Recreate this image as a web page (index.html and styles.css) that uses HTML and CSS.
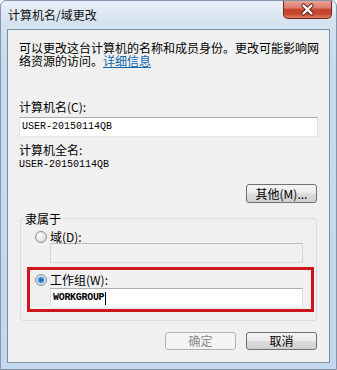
FILE: index.html
```html
<!DOCTYPE html>
<html lang="zh-CN">
<head>
<meta charset="utf-8">
<title>计算机名/域更改</title>
<link rel="stylesheet" href="styles.css">
</head>
<body>
<div class="window">
  <div class="titlebar">
    <span class="title">计算机名/域更改</span>
    <button class="close" aria-label="关闭">
      <svg width="47" height="17" viewBox="0 0 47 17">
        <path d="M19.5 4.5 L27.5 12.5 M27.5 4.5 L19.5 12.5" stroke="#5b1c12" stroke-width="4.2" stroke-linecap="round" fill="none"/>
        <path d="M19.5 4.5 L27.5 12.5 M27.5 4.5 L19.5 12.5" stroke="#ffffff" stroke-width="2.4" stroke-linecap="round" fill="none"/>
      </svg>
    </button>
  </div>
  <div class="client">
    <p class="desc">可以更改这台计算机的名称和成员身份。更改可能影响网络资源的访问。<a class="link" href="#">详细信息</a></p>
    <div class="label label-name">计算机名(C):</div>
    <div class="field field-name">USER-20150114QB</div>
    <div class="label label-full">计算机全名:</div>
    <div class="value">USER-20150114QB</div>
    <div class="more-row"><button class="btn">其他(M)...</button></div>
    <fieldset class="group">
      <legend class="legend">隶属于</legend>
      <div class="radio-row row-domain"><span class="radio"></span><span class="radio-text">域(D):</span></div>
      <div class="field field-sub field-disabled"></div>
      <div class="highlight">
        <div class="radio-row row-work"><span class="radio radio-on"></span><span class="radio-text">工作组(W):</span></div>
        <div class="field field-sub field-work"><span class="work-text">WORKGROUP</span><span class="caret"></span></div>
      </div>
    </fieldset>
    <div class="actions">
      <button class="btn btn-disabled">确定</button>
      <button class="btn">取消</button>
    </div>
  </div>
</div>
</body>
</html>
```

FILE: styles.css
```css
* { box-sizing: border-box; }

html, body {
  margin: 0;
  padding: 0;
}

body {
  width: 337px;
  height: 370px;
  overflow: hidden;
  font-family: "Noto Sans CJK SC", "Noto Sans", sans-serif;
  font-size: 12px;
  line-height: 12px;
  color: #000;
  background: #ffffff;
}

.window {
  height: 370px;
  display: flex;
  flex-direction: column;
  border: 1px solid #8396ab;
  border-radius: 6px 6px 0 0;
  background: linear-gradient(#e9eff7 0px, #d6e3f1 20px, #c9dbee 60px, #c4d7ec 100%);
}

.titlebar {
  height: 28px;
  display: flex;
  align-items: flex-start;
  padding-left: 7px;
}

.title {
  margin-top: 8px;
  font-size: 12px;
  line-height: 12px;
  color: #111;
}

.close {
  margin-left: auto;
  margin-right: 4px;
  width: 49px;
  height: 18px;
  padding: 0;
  border: 1px solid #70281d;
  border-top: none;
  border-radius: 0 0 5px 5px;
  background: linear-gradient(#e9a394 0%, #dc7c69 40%, #c63f2a 52%, #c9472f 75%, #de7b63 100%);
  display: flex;
  align-items: center;
  justify-content: center;
}

.close svg { display: block; }

.client {
  flex: 1;
  margin: 0 6px 6px 6px;
  border: 1px solid #7a8ea4;
  background: #f0f0f0;
  padding: 11px 11px 0 11px;
  display: flex;
  flex-direction: column;
}

.desc {
  margin: 0 -3px 0 0;
  line-height: 13px;
}

.link {
  display: inline-block;
  line-height: 13px;
  height: 13px;
  vertical-align: top;
  color: #0a66b0;
  text-decoration: underline;
}

.label { line-height: 12px; }
.label-name { margin-top: 34px; }
.label-full { margin-top: 7px; }

.field {
  height: 20px;
  background: #fff;
  border: 1px solid;
  border-color: #abadb3 #dbdfe6 #e3e9ef #e2e3ea;
  padding-left: 2px;
  font-family: "Liberation Mono", monospace;
  font-size: 10px;
  line-height: 18px;
  display: flex;
  align-items: center;
}

.field-name { margin-top: 4px; }

.value {
  margin-top: 3px;
  font-family: "Liberation Mono", monospace;
  font-size: 10px;
  line-height: 12px;
}

.more-row {
  margin-top: 13px;
  margin-right: 1px;
  display: flex;
  justify-content: flex-end;
}

.btn {
  width: 71px;
  height: 19px;
  padding: 0;
  border: 1px solid #707070;
  border-radius: 3px;
  background: linear-gradient(#f3f3f3 0%, #ececec 45%, #dddddd 52%, #d0d0d0 100%);
  font-family: "Noto Sans CJK SC", sans-serif;
  font-size: 12px;
  line-height: 16px;
  color: #000;
}

.btn-disabled {
  border-color: #adb2b5;
  background: #f4f4f4;
  color: #8a8a8a;
}

.group {
  margin: 9px 1px 0 1px;
  padding: 0 0 8px 0;
  border: 1px solid #d5dfe5;
  border-radius: 3px;
  min-width: 0;
}

.legend {
  margin-left: 3px;
  padding: 0 1px;
  line-height: 13px;
}

.radio-row {
  display: flex;
  align-items: center;
  height: 12px;
  gap: 3px;
}

.row-domain {
  margin-top: 6px;
  padding-left: 14px;
}

.radio {
  width: 12px;
  height: 12px;
  border-radius: 50%;
  border: 1px solid #8c8f94;
  background: radial-gradient(circle at 40% 35%, #ffffff 0, #e6e6e6 50%, #cfcfcf 100%);
  flex: none;
}

.radio-on {
  background: radial-gradient(circle, #1d5c9c 0, #3b83c7 2px, #7db8e8 3.2px, #e9e9e9 4.2px, #cfcfcf 100%);
}

.field-sub {
  width: 253px;
  margin-left: 29px;
}

.field-disabled {
  background: #f0f0f0;
  border-color: #b9bec4 #d4d8dd #d9dde2 #d4d8dd;
}

.highlight {
  margin: 4px 2px 0 6px;
  border: 3px solid #d0141e;
  padding: 4px 0 1px 0;
}

.row-work { padding-left: 5px; }

.field-work {
  margin-top: 2px;
  margin-left: 20px;
}

.work-text {
  font-weight: bold;
  letter-spacing: -0.3px;
}

.caret {
  display: inline-block;
  width: 1px;
  height: 13px;
  background: #000;
  margin-left: 1px;
}

.actions {
  margin-top: 11px;
  margin-right: 1px;
  display: flex;
  justify-content: flex-end;
  gap: 10px;
}

.actions .btn { height: 18px; }
```
